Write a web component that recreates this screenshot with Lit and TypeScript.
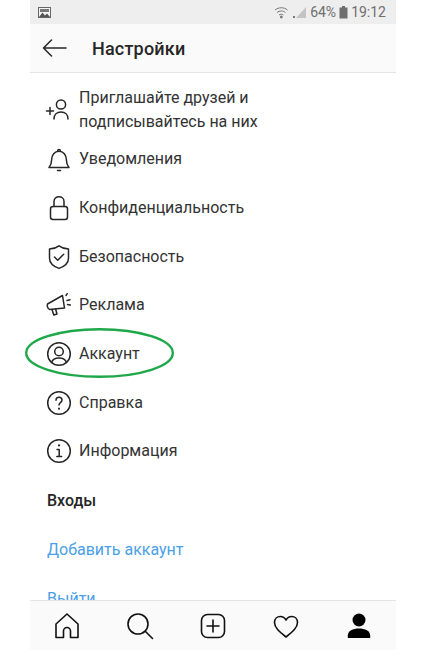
import { LitElement, html, css, svg } from "lit";
import { customElement } from "lit/decorators.js";

const stroke = (w: number, vb: number, body: unknown, cls = "ic") =>
  html`<svg class=${cls} viewBox="0 0 ${vb} ${vb}" fill="none" stroke="#262626" stroke-width=${w} stroke-linecap="round" stroke-linejoin="round">${body}</svg>`;

const icons: Record<string, unknown> = {
  invite: stroke(1.5, 28, svg`<path d="M1.500 15h7M5 11.500v7"/><circle cx="16" cy="8.500" r="4.600"/><path d="M9 23c0-4.500 3-7 7-7s7 2.500 7 7"/>`),
  bell: stroke(1.5, 28, svg`<path d="M4 22.500c1.800-2 2.600-3.500 2.600-7.500 0-5 3-8.800 7.400-8.800s7.400 3.800 7.400 8.800c0 4 .8 5.500 2.600 7.500z"/><path d="M12.600 6.200c0-1 .6-1.700 1.400-1.700s1.400.7 1.400 1.700M12.500 25.500h3"/>`),
  lock: stroke(1.5, 28, svg`<rect x="5.500" y="12.500" width="17" height="13" rx="2.500"/><path d="M9 12.500V7.500C9 4.600 11.200 2.800 14 2.800s5 1.800 5 4.700v5"/>`),
  shield: stroke(1.5, 28, svg`<path d="M14 2.800c2.600 2 5.600 3 9.500 3.200v9c0 5.200-3.800 8.400-9.500 10.400C8.300 23.400 4.500 20.200 4.500 15V6c3.900-.2 6.900-1.200 9.500-3.200z"/><path d="M9.500 14l3.200 3.200 6-6"/>`),
  ads: stroke(1.5, 28, svg`<path d="M2.500 13l15-8.500 2 12.500-15 1.500c-1.500-1-2.500-3.500-2-5.500z"/><path d="M7 18.500l1.800 5.500 3.200-1-1.400-5M21 4.500l1.200-1.800M22 9.500l3-.8M22.500 13.500l2.800.6"/>`),
  account: stroke(1.5, 28, svg`<circle cx="14" cy="14" r="11.300"/><circle cx="14" cy="11.500" r="4.300"/><path d="M6.500 22.500c1-3 3.500-4.500 7.500-4.500s6.500 1.500 7.500 4.500"/>`),
  help: stroke(1.5, 28, svg`<circle cx="14" cy="14" r="11.300"/><path d="M11 11.200c0-1.900 1.300-3 3-3s3 1.100 3 2.800c0 2.600-3 2.700-3 5"/><path d="M14 19.600v.1" stroke-width="2"/>`),
  info: stroke(1.5, 28, svg`<circle cx="14" cy="14" r="11.300"/><path d="M12 12.500h2.200v7M11.800 19.500h4.800"/><path d="M14 8.300v.1" stroke-width="2.200"/>`),
};

const rows = [
  { i: "bell", t: "Уведомления" },
  { i: "lock", t: "Конфиденциальность" },
  { i: "shield", t: "Безопасность" },
  { i: "ads", t: "Реклама" },
  { i: "account", t: "Аккаунт", mark: true },
  { i: "help", t: "Справка" },
  { i: "info", t: "Информация" },
];

@customElement("app-root")
export class AppRoot extends LitElement {
  static styles = css`
    :host { display: block; width: 427px; height: 650px; background: #fff; overflow: hidden; font-family: Roboto, "Liberation Sans", sans-serif; color: #262626; }
    .phone { width: 366px; height: 650px; margin-left: 30px; display: flex; flex-direction: column; }
    .status { height: 24px; flex: none; background: #eeeeee; display: flex; align-items: center; padding: 0 10px 0 8px; color: #6f6f6f; font-size: 14px; gap: 3px; }
    .status .sp { flex: 1; }
    .header { height: 49px; flex: none; background: #fafafa; border-bottom: 1px solid #e4e4e4; display: flex; align-items: center; padding-left: 12px; box-sizing: border-box; }
    .back { width: 25px; height: 18px; flex: none; }
    .title { margin-left: 25px; font-size: 18px; font-weight: 500; letter-spacing: .2px; }
    .scroll { flex: 1; min-height: 0; }
    .invite { height: 50px; padding-top: 12px; display: flex; align-items: center; padding-left: 15px; }
    .row { height: 48.700px; display: flex; align-items: center; padding-left: 15px; position: relative; }
    .ic { width: 28px; height: 28px; flex: none; }
    .label { margin-left: 6px; font-size: 16px; line-height: 24px; color: #333; }
    .mark { position: absolute; left: -5px; top: -1.500px; width: 149px; height: 50px; }
    .section { height: 48.700px; display: flex; align-items: center; padding-left: 17px; font-size: 16px; font-weight: 500; }
    .link { height: 49px; display: flex; align-items: center; padding-left: 17px; font-size: 16px; color: #4a9fe8; }
    .tabs { position: relative; height: 50px; flex: none; box-sizing: border-box; background: #fafafa; border-top: 1px solid #e4e4e4; display: flex; align-items: center; justify-content: space-between; padding: 0 23px; }
    .tab { width: 28px; height: 28px; }
  `;

  render() {
    return html`<div class="phone">
      <div class="status">
        <svg width="13" height="11" viewBox="0 0 13 11"><rect x=".5" y=".5" width="12" height="10" fill="#f4f4f4" stroke="#666"/><path d="M1 10l3.500-4.500 2.500 3 2-2 3 3.500z" fill="#555"/><rect x="2" y="2" width="9" height="3" fill="#777"/></svg>
        <span class="sp"></span>
        <svg width="16" height="13" viewBox="0 0 16 13" fill="none" stroke="#777" stroke-width="1"><path d="M1 4c3.500-3 9-3 12.500 0M3 6.500c2.500-2 6-2 8.500 0M5 9c1.500-1 3-1 4.500 0"/><circle cx="7.300" cy="11" r="1" fill="#777"/></svg>
        <svg width="14" height="13" viewBox="0 0 14 13"><path d="M13 1v11H3z" fill="#c4c4c4"/><rect x="0" y="10" width="2" height="2" fill="#777"/></svg>
        <span>64%</span>
        <svg width="9" height="13" viewBox="0 0 9 13"><rect x="3" y="0" width="3" height="2" fill="#6f6f6f"/><rect x=".5" y="1.500" width="8" height="11" fill="#6f6f6f"/></svg>
        <span>19:12</span>
      </div>
      <div class="header">
        <svg class="back" viewBox="0 0 25 18" fill="none" stroke="#262626" stroke-width="1.500" stroke-linecap="round" stroke-linejoin="round"><path d="M24 9H1.500M9.500 1L1.500 9l8 8"/></svg>
        <span class="title">Настройки</span>
      </div>
      <div class="scroll">
        <div class="invite">${icons.invite}<span class="label">Приглашайте друзей и<br />подписывайтесь на них</span></div>
        ${rows.map(
          (r) => html`<div class="row">${icons[r.i]}<span class="label">${r.t}</span>
            ${r.mark
              ? html`<svg class="mark" viewBox="0 0 149 50" fill="none"><ellipse cx="74.500" cy="25" rx="73.300" ry="23.800" stroke="#1fa84a" stroke-width="2.400"/></svg>`
              : ""}</div>`
        )}
        <div class="section">Входы</div>
        <div class="link">Добавить аккаунт</div>
        <div class="link">Выйти</div>
      </div>
      <div class="tabs">
        <svg class="tab" viewBox="0 0 28 28" fill="none" stroke="#111" stroke-width="1.600" stroke-linejoin="round"><path d="M3 12L14 2l11 10v13.500h-7.500V19a3.500 3.500 0 0 0-7 0v6.500H3z"/></svg>
        <svg class="tab" viewBox="0 0 28 28" fill="none" stroke="#111" stroke-width="1.600" stroke-linecap="round"><circle cx="12" cy="12" r="10"/><path d="M19.500 19.500L26.500 26.500"/></svg>
        <svg class="tab" viewBox="0 0 28 28" fill="none" stroke="#111" stroke-width="1.600" stroke-linecap="round"><rect x="2.500" y="2.500" width="23" height="23" rx="6"/><path d="M14 8v12M8 14h12"/></svg>
        <svg class="tab" viewBox="0 0 28 28" fill="none" stroke="#111" stroke-width="1.600" stroke-linejoin="round"><path d="M14 25C7 19.500 2.500 15.500 2.500 10.500 2.500 6.800 5.200 4.500 8.300 4.500c2.500 0 4.500 1.300 5.700 3.500 1.200-2.200 3.200-3.500 5.700-3.500 3.100 0 5.800 2.300 5.800 6 0 5-4.500 9-11.500 14.500z"/></svg>
        <svg class="tab" viewBox="0 0 28 28" fill="#000"><circle cx="14" cy="8" r="6.500"/><path d="M2.800 26v-2.500C2.800 19 8 16.500 14 16.500s11.200 2.500 11.200 7V26z"/></svg>
      </div>
    </div>`;
  }
}
